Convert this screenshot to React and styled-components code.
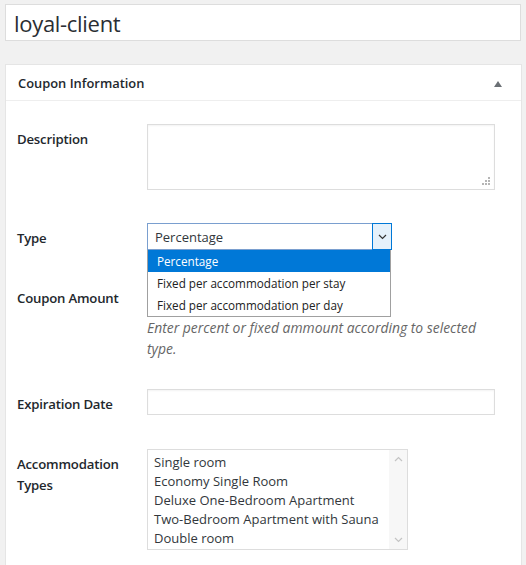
import styled, { createGlobalStyle } from "styled-components";

const GlobalStyle = createGlobalStyle`
  html, body {
    margin: 0;
    background: #f1f1f1;
    font-family: "Open Sans", "Noto Sans", sans-serif;
    color: #23282d;
  }
`;

const Page = styled.div`
  padding: 4px 5px 0 5px;
  height: 561px;
  overflow: hidden;
`;

const TitleInput = styled.div`
  height: 35px;
  border: 1px solid #dddddd;
  background: #fff;
  box-sizing: content-box;
  padding: 0 8px;
  display: flex;
  align-items: center;
  font-size: 22px;
  color: #2a2e33;
  letter-spacing: -0.3px;
`;

const Panel = styled.div`
  margin-top: 23px;
  background: #fff;
  border: 1px solid #e5e5e5;
  margin-right: -1px;
  height: 600px;
`;

const PanelHeader = styled.div`
  height: 35px;
  padding: 0 12px;
  display: flex;
  align-items: center;
  justify-content: space-between;
  border-bottom: 1px solid #eeeeee;
  font-size: 12.9px;
  font-weight: 600;
`;

const Toggle = styled.span`
  width: 0;
  height: 0;
  border-left: 4px solid transparent;
  border-right: 4px solid transparent;
  border-bottom: 6px solid #6b7075;
  margin-right: 7px;
  margin-top: 2px;
`;

const Body = styled.div`
  padding: 0 11px;
`;

const Row = styled.div`
  display: grid;
  grid-template-columns: 130px 1fr;
  align-items: start;
  padding-top: ${(p) => p.gap}px;
`;

const Label = styled.div`
  font-size: 13.2px;
  font-weight: 600;
  line-height: 21px;
  padding-top: 5px;
  letter-spacing: -0.2px;
`;

const Field = styled.div`
  position: relative;
`;

const TextArea = styled.div`
  width: 346px;
  height: 64px;
  border: 1px solid #dddddd;
  box-shadow: inset 0 1px 2px rgba(0, 0, 0, 0.05);
  position: relative;
`;

const Grip = styled.svg`
  position: absolute;
  right: 3px;
  bottom: 3px;
`;

const Select = styled.div`
  width: 243px;
  height: 25px;
  border: 1px solid #7a9fcf;
  display: flex;
  align-items: stretch;
  font-size: 13px;
`;

const SelectValue = styled.div`
  flex: 1;
  padding-left: 7px;
  display: flex;
  align-items: center;
  color: #32373c;
`;

const SelectButton = styled.div`
  width: 18px;
  background: #e5f1fb;
  border: 1px solid #0078d7;
  margin: -1px -1px -1px 0;
  display: flex;
  align-items: center;
  justify-content: center;
`;

const Dropdown = styled.div`
  position: absolute;
  top: 27px;
  left: 0;
  width: 242px;
  border: 1px solid #a0a0a0;
  border-top: none;
  background: #fff;
  z-index: 2;
  font-size: 11.7px;
`;

const Option = styled.div`
  height: 22px;
  line-height: 22px;
  padding-left: 9px;
  color: ${(p) => (p.active ? "#fff" : "#222")};
  background: ${(p) => (p.active ? "#0078d7" : "transparent")};
`;

const TextInput = styled.div`
  width: ${(p) => p.width}px;
  height: ${(p) => p.height}px;
  border: 1px solid #dddddd;
  box-shadow: inset 0 1px 2px rgba(0, 0, 0, 0.05);
`;

const Help = styled.p`
  margin: 7px 0 0;
  font-size: 13.9px;
  font-style: italic;
  line-height: 21px;
  color: #666;
  width: 345px;
`;

const ListBox = styled.div`
  width: 259px;
  height: 99px;
  border: 1px solid #dddddd;
  display: flex;
  font-size: 13px;
`;

const ListItems = styled.div`
  flex: 1;
  padding: 3px 0 0 6px;
  line-height: 19px;
  color: #32373c;
  white-space: nowrap;
`;

const ScrollBar = styled.div`
  width: 18px;
  background: #f7f7f7;
  display: flex;
  flex-direction: column;
  justify-content: space-between;
  align-items: center;
  padding: 6px 0;
`;

const Chevron = ({ up, color = "#c4c4c4" }) => (
  <svg width="9" height="6" viewBox="0 0 9 6">
    <path
      d={up ? "M1 5 L4.5 1.5 L8 5" : "M1 1 L4.5 4.5 L8 1"}
      fill="none"
      stroke={color}
      strokeWidth="1.2"
    />
  </svg>
);

const rooms = [
  "Single room",
  "Economy Single Room",
  "Deluxe One-Bedroom Apartment",
  "Two-Bedroom Apartment with Sauna",
  "Double room",
];

export default function App() {
  return (
    <Page>
      <GlobalStyle />
      <TitleInput>loyal-client</TitleInput>
      <Panel>
        <PanelHeader>
          <span>Coupon Information</span>
          <Toggle />
        </PanelHeader>
        <Body>
          <Row gap={23}>
            <Label>Description</Label>
            <Field>
              <TextArea>
                <Grip width="9" height="9" viewBox="0 0 9 9">
                  <g fill="#b5b5b5">
                    <rect x="6" y="0" width="2" height="2" />
                    <rect x="3" y="3" width="2" height="2" />
                    <rect x="6" y="3" width="2" height="2" />
                    <rect x="0" y="6" width="2" height="2" />
                    <rect x="3" y="6" width="2" height="2" />
                    <rect x="6" y="6" width="2" height="2" />
                  </g>
                </Grip>
              </TextArea>
            </Field>
          </Row>
          <Row gap={33}>
            <Label>Type</Label>
            <Field>
              <Select>
                <SelectValue>Percentage</SelectValue>
                <SelectButton>
                  <Chevron color="#333" />
                </SelectButton>
              </Select>
              <Dropdown>
                <Option active>Percentage</Option>
                <Option>Fixed per accommodation per stay</Option>
                <Option>Fixed per accommodation per day</Option>
              </Dropdown>
            </Field>
          </Row>
          <Row gap={33}>
            <Label>Coupon Amount</Label>
            <Field>
              <TextInput width={120} height={25} />
              <Help>Enter percent or fixed ammount according to selected type.</Help>
            </Field>
          </Row>
          <Row gap={30}>
            <Label>Expiration Date</Label>
            <Field>
              <TextInput width={346} height={24} />
            </Field>
          </Row>
          <Row gap={34}>
            <Label>
              Accommodation
              <br />
              Types
            </Label>
            <Field>
              <ListBox>
                <ListItems>
                  {rooms.map((r) => (
                    <div key={r}>{r}</div>
                  ))}
                </ListItems>
                <ScrollBar>
                  <Chevron up />
                  <Chevron />
                </ScrollBar>
              </ListBox>
            </Field>
          </Row>
        </Body>
      </Panel>
    </Page>
  );
}
